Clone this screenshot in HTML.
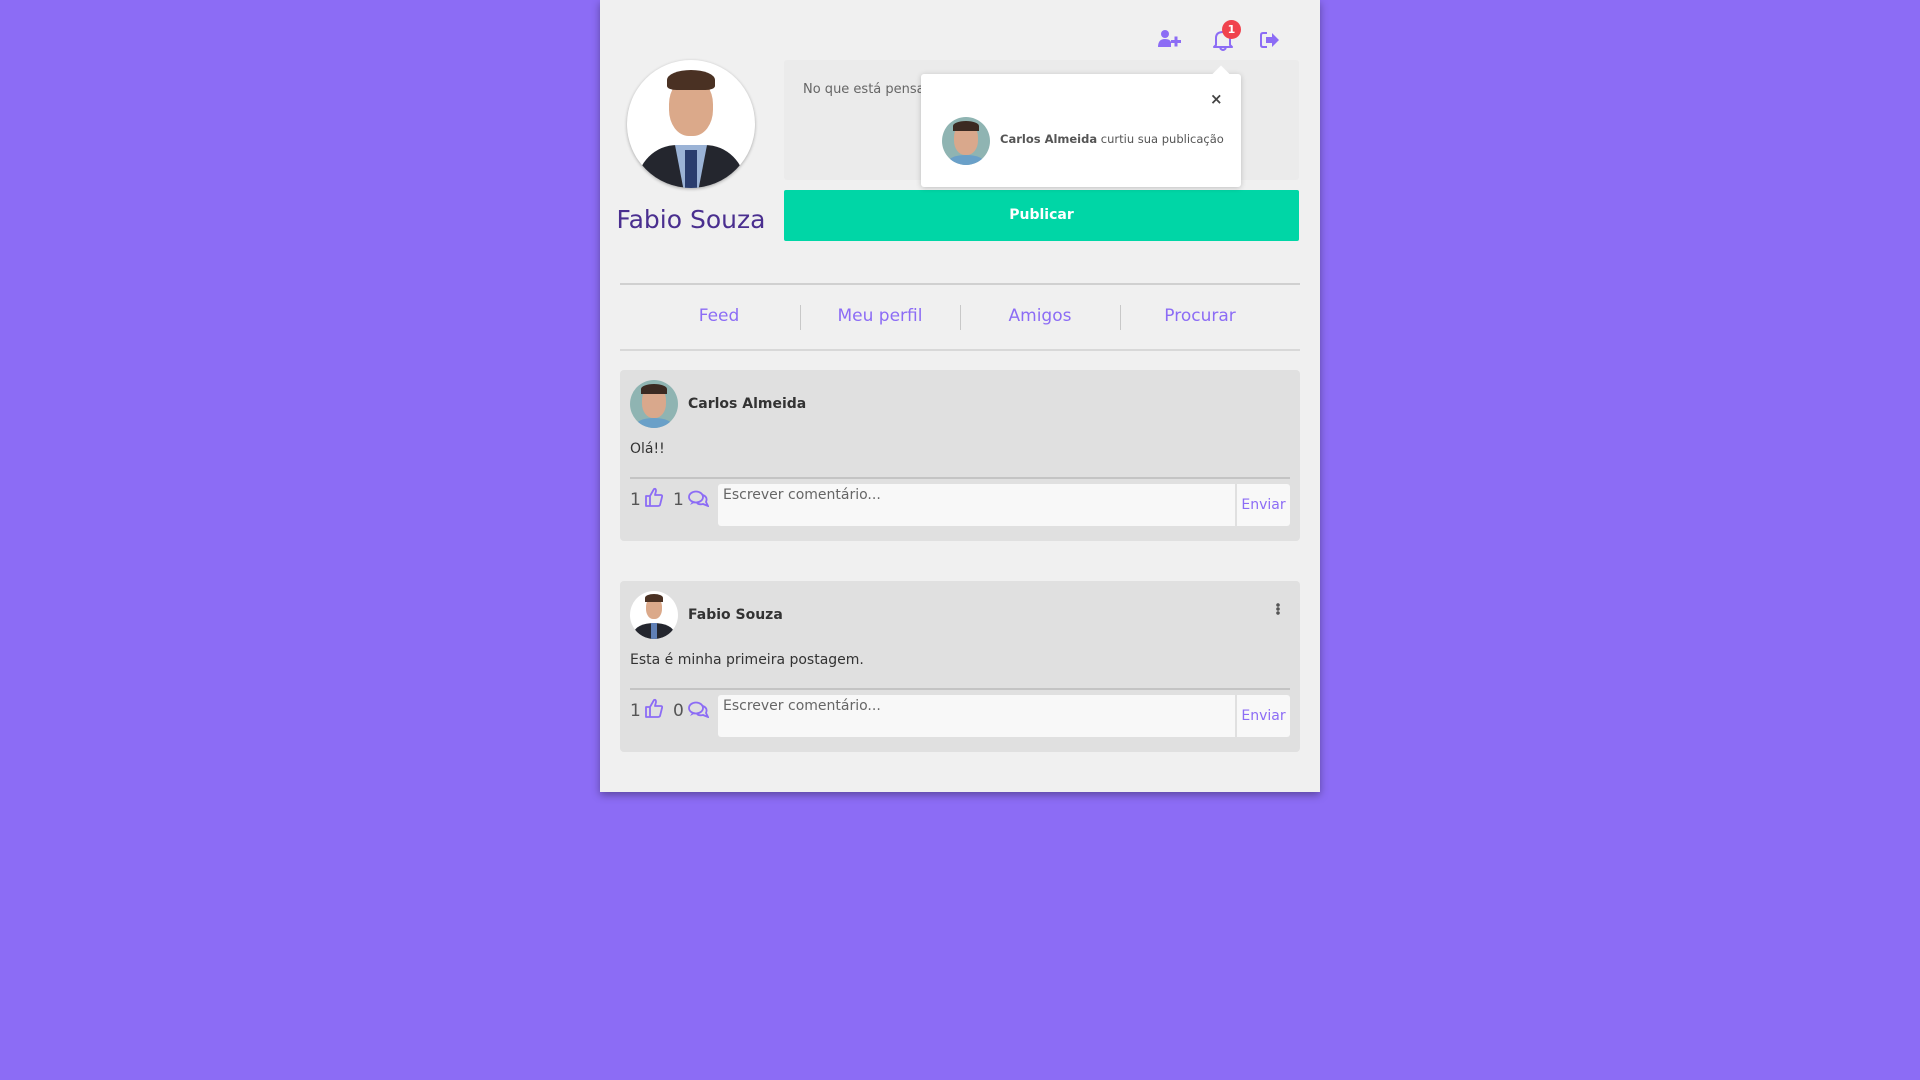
<!DOCTYPE html>
<html><head><meta charset="utf-8"><style>
*{box-sizing:border-box;margin:0;padding:0}
body{width:1920px;height:1080px;background:#8c6cf5;font-family:"DejaVu Sans","Liberation Sans",sans-serif;position:relative;overflow:hidden}
.c{position:absolute;left:600px;top:0;width:720px;height:792px;background:#f0f0f0;box-shadow:0 3px 8px rgba(0,0,0,.35)}
.a{position:absolute}
.av{position:absolute;border-radius:50%;overflow:hidden}
.post{position:absolute;left:20px;width:680px;background:#e0e0e0;border-radius:4px}
.name{position:absolute;left:68px;font-weight:bold;font-size:14px;color:#333}
.hr{position:absolute;left:10px;width:660px;height:2px;background:#c4c4c4}
.inp{position:absolute;left:98px;width:517px;height:42px;background:#f8f8f8;border-radius:3px 0 0 3px;font-size:14px;color:#666;padding:3px 5px}
.env{position:absolute;left:617px;width:53px;height:42px;background:#f8f8f8;border-radius:0 3px 3px 0;font-size:14px;color:#8c6cf5;line-height:42px;text-align:center}
.cnt{position:absolute;font-size:17px;color:#555}
.nav{position:absolute;top:306px;font-size:17px;color:#8c6cf5;text-align:center;width:160px}
.dv{position:absolute;top:305px;width:1px;height:25px;background:#c8c8c8}
</style></head><body>
<div class="c">
 <svg class="a" style="left:558px;top:30px" width="25" height="17" viewBox="0 0 25 17"><circle cx="7" cy="4" r="4" fill="#8c6cf5"/><path d="M0 17 Q0 9 7 9 Q12 9 13 12 L13 17Z" fill="#8c6cf5"/><rect x="13" y="10" width="10" height="3" fill="#8c6cf5"/><rect x="16.5" y="6.5" width="3" height="10" fill="#8c6cf5"/></svg>
 <svg class="a" style="left:612px;top:29px" width="22" height="22" viewBox="0 0 22 22"><path d="M4 16 L4 9 Q4 3 11 3 Q18 3 18 9 L18 16 L20 18 L2 18Z" fill="none" stroke="#8c6cf5" stroke-width="2" stroke-linejoin="round"/><path d="M8 19 Q11 23 14 19" fill="none" stroke="#8c6cf5" stroke-width="2"/></svg>
 <div class="a" style="left:622px;top:20px;width:19px;height:19px;border-radius:50%;background:#f0424d;color:#fff;font-size:11px;font-weight:bold;text-align:center;line-height:19px">1</div>
 <svg class="a" style="left:660px;top:32px" width="20" height="16" viewBox="0 0 20 16"><path d="M7 1 L3 1 Q1 1 1 3 L1 13 Q1 15 3 15 L7 15" fill="none" stroke="#8c6cf5" stroke-width="2"/><path d="M6 5 L12 5 L12 1 L19 8 L12 15 L12 11 L6 11Z" fill="#8c6cf5"/></svg>
 <div class="av" style="left:27px;top:60px;width:128px;height:128px;background:#fff;box-shadow:0 1px 3px rgba(0,0,0,.3)">
  <div class="a" style="left:10px;top:85px;width:108px;height:60px;border-radius:40px 40px 0 0;background:#24262e"></div>
  <div class="a" style="left:48px;top:85px;width:32px;height:50px;background:#9bb3d6;clip-path:polygon(0 0,100% 0,70% 100%,30% 100%)"></div>
  <div class="a" style="left:58px;top:90px;width:12px;height:45px;background:#2a3d6e"></div>
  <div class="a" style="left:42px;top:18px;width:44px;height:58px;border-radius:45%;background:#dba98a"></div>
  <div class="a" style="left:40px;top:10px;width:48px;height:20px;border-radius:50% 50% 20% 20%;background:#4a3123"></div>
 </div>
 <div class="a" style="left:0px;top:205px;font-size:25px;color:#4a2f8f;width:182px;text-align:center;white-space:nowrap">Fabio Souza</div>
 <div class="a" style="left:184px;top:60px;width:515px;height:120px;background:#ebebeb;border-radius:3px"></div>
 <div class="a" style="left:203px;top:82px;font-size:13px;color:#666">No que está pensando?</div>
 <div class="a" style="left:184px;top:190px;width:515px;height:51px;background:#00d6a6;border-radius:2px;color:#fff;font-weight:bold;font-size:14px;text-align:center;line-height:51px">Publicar</div>
 <div class="a" style="left:321px;top:74px;width:320px;height:113px;background:#fff;border-radius:3px;box-shadow:0 1px 6px rgba(0,0,0,.2)"></div>
 <div class="a" style="left:615px;top:68px;width:12px;height:12px;background:#fff;transform:rotate(45deg)"></div>
 <div class="a" style="left:610px;top:90px;font-size:15px;font-weight:bold;color:#444">×</div>
 <div class="av" style="left:342px;top:117px;width:48px;height:48px;background:#8fb4b2">
  <div class="a" style="left:12px;top:6px;width:24px;height:32px;border-radius:45%;background:#d9a88c"></div>
  <div class="a" style="left:11px;top:4px;width:26px;height:10px;border-radius:50% 50% 0 0;background:#3b2a22"></div>
  <div class="a" style="left:6px;top:38px;width:36px;height:14px;border-radius:50% 50% 0 0;background:#6aa0c8"></div>
 </div>
 <div class="a" style="left:400px;top:132px;font-size:11.5px;color:#555;white-space:nowrap"><b>Carlos Almeida</b> curtiu sua publicação</div>
 <div class="a" style="left:20px;top:283px;width:680px;height:2px;background:#d0d0d0"></div>
 <div class="nav" style="left:39px">Feed</div>
 <div class="dv" style="left:200px"></div>
 <div class="nav" style="left:200px">Meu perfil</div>
 <div class="dv" style="left:360px"></div>
 <div class="nav" style="left:360px">Amigos</div>
 <div class="dv" style="left:520px"></div>
 <div class="nav" style="left:520px">Procurar</div>
 <div class="a" style="left:20px;top:349px;width:680px;height:2px;background:#d8d8d8"></div>
 <div class="post" style="top:370px;height:171px">
  <div class="av" style="left:10px;top:10px;width:48px;height:48px;background:#8fb4b2">
   <div class="a" style="left:12px;top:6px;width:24px;height:32px;border-radius:45%;background:#d9a88c"></div>
   <div class="a" style="left:11px;top:4px;width:26px;height:10px;border-radius:50% 50% 0 0;background:#3b2a22"></div>
   <div class="a" style="left:6px;top:38px;width:36px;height:14px;border-radius:50% 50% 0 0;background:#6aa0c8"></div>
  </div>
  <div class="name" style="top:26px">Carlos Almeida</div>
  <div class="a" style="left:10px;top:71px;font-size:14px;color:#333">Olá!!</div>
  <div class="hr" style="top:107px"></div>
  <div class="cnt" style="left:10px;top:120px">1</div>
  <svg class="a" style="left:25px;top:117px" width="18" height="20" viewBox="0 0 18 20"><path d="M1 9 L5 9 L5 19 L1 19Z M5 9 L9 2 Q11 1 11 4 L10 8 L16 8 Q17.5 8 17 10 L15 18 Q14.5 19 13 19 L5 19" fill="none" stroke="#8c6cf5" stroke-width="1.8" stroke-linejoin="round"/></svg>
  <div class="cnt" style="left:53px;top:120px">1</div>
  <svg class="a" style="left:68px;top:120px" width="21" height="17" viewBox="0 0 21 17"><ellipse cx="8" cy="7" rx="7" ry="5.5" fill="none" stroke="#8c6cf5" stroke-width="1.8"/><path d="M4 12 L2 15 L7 12.5" fill="#8c6cf5"/><path d="M15 5 Q20 7 18 12 L20 16 L15 14 Q11 15 9 13" fill="none" stroke="#8c6cf5" stroke-width="1.8"/></svg>
  <div class="inp" style="top:114px">Escrever comentário...</div>
  <div class="env" style="top:114px">Enviar</div>
 </div>
 <div class="post" style="top:581px;height:171px">
  <div class="av" style="left:10px;top:10px;width:48px;height:48px;background:#fff">
   <div class="a" style="left:4px;top:32px;width:40px;height:20px;border-radius:50% 50% 0 0;background:#24262e"></div>
   <div class="a" style="left:21px;top:32px;width:6px;height:16px;background:#5f7fb5"></div>
   <div class="a" style="left:16px;top:6px;width:16px;height:22px;border-radius:45%;background:#dba98a"></div>
   <div class="a" style="left:15px;top:3px;width:18px;height:8px;border-radius:50% 50% 0 0;background:#4a3123"></div>
  </div>
  <div class="name" style="top:26px">Fabio Souza</div>
  <div class="a" style="left:656px;top:22px;width:4px;height:12px;background:radial-gradient(circle,#555 1.6px,transparent 2px) 0 0/4px 4px"></div>
  <div class="a" style="left:10px;top:71px;font-size:14px;color:#333">Esta é minha primeira postagem.</div>
  <div class="hr" style="top:107px"></div>
  <div class="cnt" style="left:10px;top:120px">1</div>
  <svg class="a" style="left:25px;top:117px" width="18" height="20" viewBox="0 0 18 20"><path d="M1 9 L5 9 L5 19 L1 19Z M5 9 L9 2 Q11 1 11 4 L10 8 L16 8 Q17.5 8 17 10 L15 18 Q14.5 19 13 19 L5 19" fill="none" stroke="#8c6cf5" stroke-width="1.8" stroke-linejoin="round"/></svg>
  <div class="cnt" style="left:53px;top:120px">0</div>
  <svg class="a" style="left:68px;top:120px" width="21" height="17" viewBox="0 0 21 17"><ellipse cx="8" cy="7" rx="7" ry="5.5" fill="none" stroke="#8c6cf5" stroke-width="1.8"/><path d="M4 12 L2 15 L7 12.5" fill="#8c6cf5"/><path d="M15 5 Q20 7 18 12 L20 16 L15 14 Q11 15 9 13" fill="none" stroke="#8c6cf5" stroke-width="1.8"/></svg>
  <div class="inp" style="top:114px">Escrever comentário...</div>
  <div class="env" style="top:114px">Enviar</div>
 </div>
</div>
</body></html>
